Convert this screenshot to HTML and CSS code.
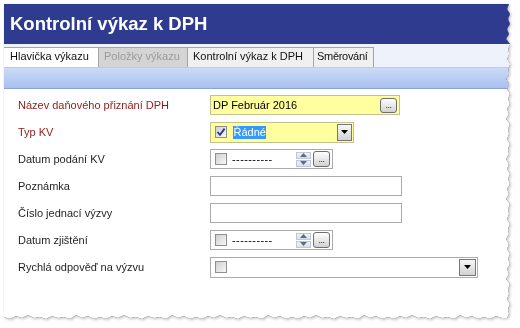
FILE: index.html
```html
<!DOCTYPE html>
<html lang="cs">
<head>
<meta charset="utf-8">
<title>Kontrolní výkaz k DPH</title>
<link rel="stylesheet" href="styles.css">
</head>
<body>
<div class="frame">
  <div class="window">
    <div class="titlebar">Kontrolní výkaz k DPH</div>
    <div class="tabs">
      <div class="tab tab-active">Hlavička výkazu</div>
      <div class="tab tab-disabled">Položky výkazu</div>
      <div class="tab tab-kv">Kontrolní výkaz k DPH</div>
      <div class="tab tab-smer">Směrování</div>
    </div>
    <div class="toolbar"></div>
    <div class="form">
      <div class="label req">Název daňového přiznání DPH</div>
      <div class="field yellow w-name"><span class="val">DP Február 2016</span><span class="ebtn">...</span></div>

      <div class="label req">Typ KV</div>
      <div class="field yellow w-typ tall">
        <span class="cb"><svg width="10" height="10" viewBox="0 0 10 10"><path d="M1.5 5 L4 7.8 L8.6 1.6" fill="none" stroke="#2a3591" stroke-width="1.8"/></svg></span>
        <span class="sel">Řádné</span>
        <span class="dd"><svg width="7" height="4" viewBox="0 0 7 4"><path d="M0 0H7L3.5 4Z" fill="#000"/></svg></span>
      </div>

      <div class="label">Datum podání KV</div>
      <div class="field w-date">
        <span class="cb"></span>
        <span class="dash">----------</span>
        <span class="spin"><span class="sp"><svg width="7" height="4" viewBox="0 0 7 4"><path d="M0 4H7L3.5 0Z" fill="#5a6a8c"/></svg></span><span class="sp"><svg width="7" height="4" viewBox="0 0 7 4"><path d="M0 0H7L3.5 4Z" fill="#5a6a8c"/></svg></span></span>
        <span class="ebtn eb2">...</span>
      </div>

      <div class="label">Poznámka</div>
      <div class="field w-text"></div>

      <div class="label">Číslo jednací výzvy</div>
      <div class="field w-text"></div>

      <div class="label">Datum zjištění</div>
      <div class="field w-date">
        <span class="cb"></span>
        <span class="dash">----------</span>
        <span class="spin"><span class="sp"><svg width="7" height="4" viewBox="0 0 7 4"><path d="M0 4H7L3.5 0Z" fill="#5a6a8c"/></svg></span><span class="sp"><svg width="7" height="4" viewBox="0 0 7 4"><path d="M0 0H7L3.5 4Z" fill="#5a6a8c"/></svg></span></span>
        <span class="ebtn eb2">...</span>
      </div>

      <div class="label">Rychlá odpověď na výzvu</div>
      <div class="field w-long tall">
        <span class="cb"></span>
        <span class="dd dd-wide"><svg width="7" height="4" viewBox="0 0 7 4"><path d="M0 0H7L3.5 4Z" fill="#000"/></svg></span>
      </div>
    </div>
  </div>
</div>
</body>
</html>
```
FILE: styles.css
```css
* { box-sizing: border-box; }
body {
  margin: 0;
  background: #fff;
  font-family: "Liberation Sans", Arial, sans-serif;
  font-size: 11px;
  color: #1a1a1a;
}
.frame {
  margin: 4px 0 0 4px;
  width: 508px;
  height: 318px;
  filter: drop-shadow(0 0 0.7px rgba(0,0,0,0.85)) drop-shadow(1px 1px 1.5px rgba(0,0,0,0.25));
}
.window {
  width: 100%;
  height: 100%;
  background: #fff;
  display: flex;
  flex-direction: column;
  clip-path: polygon(0 0,
    505px 0, 503px 5px, 506px 10px, 504px 15px, 506px 20px, 503px 25px, 505px 30px, 502px 35px, 506px 40px, 504px 45px, 505px 50px, 503px 55px, 506px 60px, 504px 65px, 505px 70px, 502px 75px,
    505px 80px, 503px 85px, 506px 90px, 504px 95px, 506px 100px, 503px 105px, 505px 110px, 502px 115px, 506px 120px, 504px 125px, 505px 130px, 503px 135px, 506px 140px, 504px 145px, 505px 150px, 502px 155px,
    505px 160px, 503px 165px, 506px 170px, 504px 175px, 506px 180px, 503px 185px, 505px 190px, 502px 195px, 506px 200px, 504px 205px, 505px 210px, 503px 215px, 506px 220px, 504px 225px, 505px 230px, 502px 235px,
    505px 240px, 503px 245px, 506px 250px, 504px 255px, 506px 260px, 503px 265px, 505px 270px, 502px 275px, 506px 280px, 504px 285px, 505px 290px, 503px 295px, 506px 300px, 504px 305px, 505px 310px,
    503px 314px,
    498px 314px, 492px 312px, 486px 315px, 480px 313px, 474px 315px, 468px 312px, 462px 314px, 456px 311px, 450px 315px, 444px 313px, 438px 314px, 432px 312px, 426px 315px, 420px 313px, 414px 314px, 408px 311px,
    402px 314px, 396px 312px, 390px 315px, 384px 313px, 378px 315px, 372px 312px, 366px 314px, 360px 311px, 354px 315px, 348px 313px, 342px 314px, 336px 312px, 330px 315px, 324px 313px, 318px 314px, 312px 311px,
    306px 314px, 300px 312px, 294px 315px, 288px 313px, 282px 315px, 276px 312px, 270px 314px, 264px 311px, 258px 315px, 252px 313px, 246px 314px, 240px 312px, 234px 315px, 228px 313px, 222px 314px, 216px 311px,
    210px 314px, 204px 312px, 198px 315px, 192px 313px, 186px 315px, 180px 312px, 174px 314px, 168px 311px, 162px 315px, 156px 313px, 150px 314px, 144px 312px, 138px 315px, 132px 313px, 126px 314px, 120px 311px,
    114px 314px, 108px 312px, 102px 315px, 96px 313px, 90px 315px, 84px 312px, 78px 314px, 72px 311px, 66px 315px, 60px 313px, 54px 314px, 48px 312px, 42px 315px, 36px 313px, 30px 314px, 24px 311px,
    18px 314px, 12px 312px, 6px 315px, 0 313px);
}
.titlebar {
  height: 40px;
  flex: none;
  background: #2e3b8e;
  color: #fff;
  font-weight: bold;
  font-size: 18.5px;
  display: flex;
  align-items: center;
  padding: 0 0 1px 6px;
}
.tabs {
  height: 23px;
  flex: none;
  background: #eef2fa;
  display: flex;
  align-items: flex-end;
}
.tab {
  height: 20px;
  line-height: 17px;
  border-top: 1px solid #a5a5a5;
  border-right: 1px solid #a5a5a5;
  background: #f0f0f0;
  padding-left: 5px;
  white-space: nowrap;
  overflow: hidden;
  color: #111;
}
.tab-active { background: #fff; width: 95px; padding-left: 6px; }
.tab-disabled { background: #d4d4d4; color: #9b9b9b; width: 89px; }
.tab-kv { width: 126px; }
.tab-smer { width: 60px; padding-left: 3px; letter-spacing: -0.3px; }
.toolbar {
  height: 22px;
  flex: none;
  background: linear-gradient(#cbdaf7, #a9c0ef);
  border-top: 1px solid #b9cbf0;
  border-bottom: 1px solid #8aa3db;
}
.form {
  display: grid;
  grid-template-columns: 192px auto;
  grid-auto-rows: 20px;
  row-gap: 7px;
  padding: 6px 0 0 14px;
  align-items: center;
  justify-items: start;
}
.label { color: #1f1f1f; white-space: nowrap; }
.req { color: #8e1b1b; }
.field {
  height: 20px;
  border: 1px solid #ababab;
  background: #fff;
  display: flex;
  align-items: center;
}
.field.tall { height: 21px; }
.yellow { background: #ffffa0; border-color: #c2c28a; }
.w-name { width: 190px; }
.w-typ { width: 144px; }
.w-date { width: 123px; }
.w-text { width: 192px; }
.w-long { width: 268px; }
.val { padding-left: 2px; color: #000; }
.ebtn {
  margin-left: auto;
  margin-right: 2px;
  width: 17px;
  height: 15px;
  border: 1px solid #6e6e6e;
  border-radius: 3px;
  background: linear-gradient(#ffffff, #d2d2d2);
  font-size: 9px;
  line-height: 9px;
  letter-spacing: -0.5px;
  color: #222;
  display: flex;
  align-items: flex-end;
  justify-content: center;
  padding-bottom: 2px;
}
.eb2 { margin-left: 2px; height: 16px; }
.cb {
  width: 12px;
  height: 12px;
  margin-left: 4px;
  border: 1px solid #8e8f8f;
  background: linear-gradient(135deg, #cfcfcf, #f7f7f7);
  display: flex;
  align-items: center;
  justify-content: center;
  flex: none;
}
.sel {
  margin-left: 6px;
  background: #3399ff;
  color: #fff;
  line-height: 13px;
  padding: 0 0.5px;
}
.dd {
  margin-left: auto;
  margin-right: 1px;
  width: 15px;
  height: 17px;
  border: 1px solid #767676;
  background: linear-gradient(#f7f7f7, #d2d2d2);
  display: flex;
  align-items: center;
  justify-content: center;
}
.dd-wide { width: 17px; }
.dash { margin-left: 5px; letter-spacing: 0.4px; color: #000; }
.spin {
  margin-left: auto;
  width: 15px;
  height: 15px;
  display: flex;
  flex-direction: column;
  gap: 1px;
}
.sp {
  height: 7px;
  border: 1px solid #c0c8d8;
  background: linear-gradient(#eef1f7, #d8dfec);
  display: flex;
  align-items: center;
  justify-content: center;
}
```
